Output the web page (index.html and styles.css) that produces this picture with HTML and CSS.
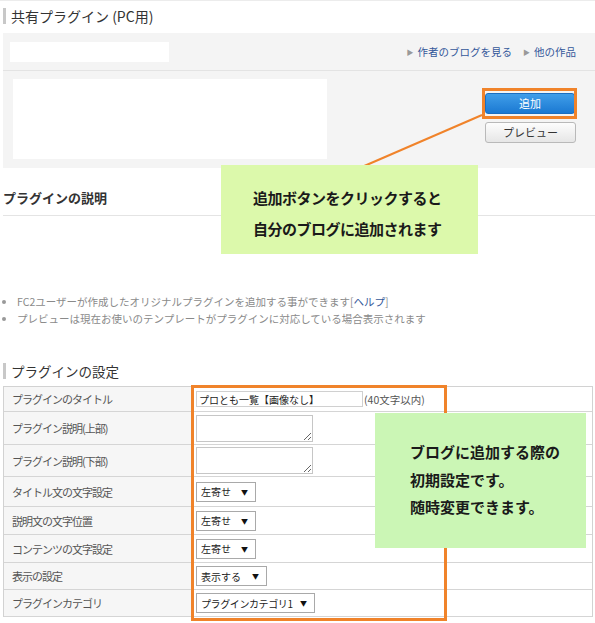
FILE: index.html
```html
<!DOCTYPE html>
<html lang="ja">
<head>
<meta charset="utf-8">
<title>共有プラグイン (PC用)</title>
<link rel="stylesheet" href="styles.css">
</head>
<body>
<div class="page">
  <div class="topline"></div>
  <h2 class="sec-title">共有プラグイン (PC用)</h2>

  <div class="panel">
    <div class="panel-top">
      <div class="name-box"></div>
      <div class="links">
        <a class="link" href="#"><span class="tri">▶</span>作者のブログを見る</a>
        <a class="link" href="#"><span class="tri">▶</span>他の作品</a>
      </div>
    </div>
    <div class="panel-body">
      <div class="preview-box"></div>
      <div class="actions">
        <button class="btn btn-add" type="button">追加</button>
        <button class="btn btn-preview" type="button">プレビュー</button>
      </div>
    </div>
  </div>

  <h3 class="desc-title">プラグインの説明</h3>

  <ul class="notes">
    <li>FC2ユーザーが作成したオリジナルプラグインを追加する事ができます[<a class="help" href="#">ヘルプ</a>]</li>
    <li>プレビューは現在お使いのテンプレートがプラグインに対応している場合表示されます</li>
  </ul>

  <h2 class="sec-title sec-settings">プラグインの設定</h2>

  <div class="settings">
    <div class="cell label">プラグインのタイトル</div>
    <div class="cell field"><input class="text-input" type="text" value="プロとも一覧【画像なし】"><span class="hint">(40文字以内)</span></div>

    <div class="cell label">プラグイン説明(上部)</div>
    <div class="cell field"><textarea class="area"></textarea></div>

    <div class="cell label">プラグイン説明(下部)</div>
    <div class="cell field"><textarea class="area"></textarea></div>

    <div class="cell label">タイトル文の文字設定</div>
    <div class="cell field"><div class="select w60"><span>左寄せ</span><span class="arrow">▼</span></div></div>

    <div class="cell label">説明文の文字位置</div>
    <div class="cell field"><div class="select w60"><span>左寄せ</span><span class="arrow">▼</span></div></div>

    <div class="cell label">コンテンツの文字設定</div>
    <div class="cell field"><div class="select w60"><span>左寄せ</span><span class="arrow">▼</span></div></div>

    <div class="cell label">表示の設定</div>
    <div class="cell field"><div class="select w71"><span>表示する</span><span class="arrow">▼</span></div></div>

    <div class="cell label">プラグインカテゴリ</div>
    <div class="cell field"><div class="select w119"><span class="tight">プラグインカテゴリ1</span><span class="arrow">▼</span></div></div>
  </div>

  <!-- annotations -->
  <svg class="pointer" width="595" height="623" viewBox="0 0 595 623" aria-hidden="true">
    <line x1="482" y1="115" x2="355" y2="170" stroke="#f0832a" stroke-width="2"/>
  </svg>
  <div class="hl hl-add"></div>
  <div class="hl hl-settings"></div>
  <div class="callout callout-add">追加ボタンをクリックすると<br>自分のブログに追加されます</div>
  <div class="callout callout-settings">ブログに追加する際の<br>初期設定です。<br>随時変更できます。</div>
</div>
</body>
</html>
```

FILE: styles.css
```css
* { box-sizing: border-box; }
html, body { margin: 0; padding: 0; background: #fff; }
body {
  font-family: "Noto Sans CJK JP", "Noto Sans", sans-serif;
  color: #333;
}
.page {
  position: relative;
  width: 595px;
  height: 623px;
  overflow: hidden;
}
.topline { height: 1px; background: #ececec; }

.sec-title {
  margin: 7px 0 0 3px;
  padding-left: 5px;
  border-left: 3px solid #c8c8c8;
  font-size: 14px;
  font-weight: normal;
  line-height: 16px;
  color: #333;
}

.panel {
  margin: 9px 0 0 3px;
  width: 592px;
  background: #f4f4f4;
}
.panel-top {
  height: 38px;
  border-bottom: 1px solid #e3e3e3;
  display: flex;
  align-items: center;
  justify-content: space-between;
  padding: 0 19px 0 7px;
}
.name-box { width: 159px; height: 20px; background: #fff; }
.links { display: flex; gap: 11px; }
.link {
  font-size: 10.5px;
  color: #34589a;
  text-decoration: none;
  display: flex;
  align-items: center;
}
.tri { font-size: 7px; color: #999; margin-right: 4px; }

.panel-body {
  height: 97px;
  display: flex;
  justify-content: space-between;
  align-items: flex-start;
  padding: 8px 19px 0 10px;
}
.preview-box { width: 314px; height: 80px; background: #fff; }
.actions {
  margin-top: 14px;
  display: flex;
  flex-direction: column;
  gap: 8px;
}
.btn {
  width: 90px;
  height: 21px;
  border-radius: 3px;
  font-family: inherit;
  font-size: 11px;
  padding: 0;
  line-height: 19px;
}
.btn-add {
  background: linear-gradient(#409ee9, #1b79d2);
  border: 1px solid #1a6ec0;
  color: #fff;
}
.btn-preview {
  width: 91px;
  background: linear-gradient(#fdfdfd, #e6e6e6);
  border: 1px solid #b9b9b9;
  color: #333;
}

.desc-title {
  margin: 21px 0 0 3px;
  padding-bottom: 8px;
  border-bottom: 1px solid #e4e4e4;
  font-size: 13px;
  line-height: 18px;
  font-weight: bold;
  color: #333;
}

.notes {
  margin: 77px 0 0 0;
  padding: 0 0 0 17px;
  font-size: 10.5px;
  line-height: 17px;
  color: #8a8a8a;
}
.notes li::marker { color: #999; font-size: 10px; }
.help { color: #34589a; text-decoration: none; }

.sec-settings { margin-top: 36px; font-size: 13.5px; }

.settings {
  margin: 7px 0 0 3px;
  width: 590px;
  display: grid;
  grid-template-columns: 188px 1fr;
  grid-template-rows: 25px 33px 32px 30px 28px 28px 27px 27px;
  border: 1px solid #d2d2d2;
  border-bottom: none;
}
.cell {
  display: flex;
  align-items: center;
  border-bottom: 1px solid #d5d5d5;
}
.label {
  background: #f6f6f6;
  border-right: 1px solid #d5d5d5;
  padding-left: 8px;
  font-size: 11px;
  letter-spacing: -1px;
  color: #555;
}
.field { padding-left: 4px; background: #fff; }

.text-input {
  width: 167px;
  height: 16px;
  margin: 0;
  border: 1px solid #d0d0d0;
  padding: 0 2px;
  font-family: inherit;
  font-size: 10px;
  color: #222;
  background: #fff;
}
.hint { font-size: 10.5px; color: #555; margin-left: 1px; }

.area {
  width: 117px;
  height: 27px;
  margin: 0;
  padding: 0;
  border: 1px solid #c6c6c6;
  background: #fff;
}

.select {
  height: 20px;
  border: 1px solid #a9a9a9;
  background: #fff;
  display: flex;
  align-items: center;
  justify-content: space-between;
  padding: 0 7px 0 4px;
  font-size: 10px;
  color: #222;
}
.tight { letter-spacing: -0.4px; }
.arrow { font-size: 7px; color: #111; }
.w60 { width: 60px; }
.w71 { width: 71px; }
.w119 { width: 119px; }

/* annotations */
.pointer { position: absolute; left: 0; top: 0; pointer-events: none; }
.hl {
  position: absolute;
  border: 3px solid #f0832a;
}
.hl-add { left: 482px; top: 88px; width: 95px; height: 31px; }
.hl-settings { left: 191px; top: 385px; width: 256px; height: 236px; }

.callout {
  position: absolute;
  font-weight: bold;
  font-size: 15px;
  color: #1a1a1a;
}
.callout-add {
  left: 221px;
  top: 165px;
  width: 257px;
  height: 89px;
  background: #dcf9ab;
  padding: 17px 0 0 32px;
  line-height: 31px;
  letter-spacing: -0.5px;
}
.callout-settings {
  left: 375px;
  top: 413px;
  width: 211px;
  height: 135px;
  background: #cbf6b5;
  padding: 25px 0 0 35px;
  line-height: 27.5px;
}
```
